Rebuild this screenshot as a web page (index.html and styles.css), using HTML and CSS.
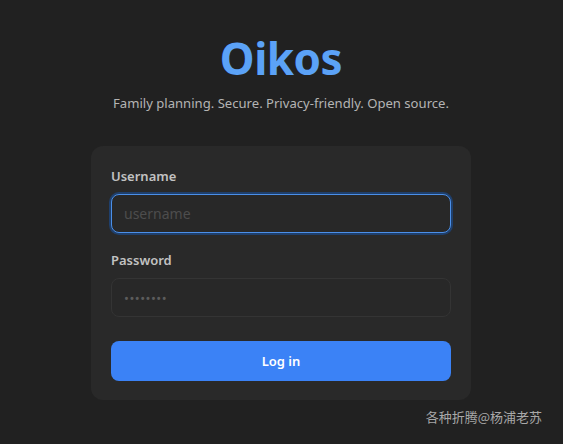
FILE: index.html
```html
<!DOCTYPE html>
<html lang="en">
<head>
<meta charset="utf-8">
<title>Oikos</title>
<link rel="stylesheet" href="styles.css">
</head>
<body>
<main class="page">
  <h1 class="brand">Oikos</h1>
  <p class="tagline">Family planning. Secure. Privacy-friendly. Open source.</p>
  <form class="card">
    <label class="label" for="username">Username</label>
    <input class="field field-focus" id="username" type="text" placeholder="username">
    <label class="label label-gap" for="password">Password</label>
    <input class="field field-pass" id="password" type="password" placeholder="••••••••">
    <button class="btn" type="button">Log in</button>
  </form>
</main>
<div class="watermark">各种折腾@杨浦老苏</div>
</body>
</html>
```

FILE: styles.css
```css
* { box-sizing: border-box; }
html, body { margin: 0; height: 100%; }
body {
  background: #212121;
  font-family: "Noto Sans", "Open Sans", sans-serif;
  color: #c8c8c8;
  position: relative;
  overflow: hidden;
}
.page {
  display: flex;
  flex-direction: column;
  align-items: center;
  padding-top: 31px;
  padding-right: 1px;
}
.brand {
  margin: 0;
  font-size: 44px;
  line-height: 54px;
  font-weight: 700;
  color: #5ba2f7;
  letter-spacing: -0.5px;
}
.tagline {
  margin: 8px 0 0;
  font-size: 13.1px;
  line-height: 20px;
  color: #b4b4b4;
}
.card {
  margin-top: 33px;
  width: 380px;
  background: #292929;
  border-radius: 12px;
  padding: 20px 20px 19px;
  display: flex;
  flex-direction: column;
}
.label {
  font-size: 13px;
  line-height: 20px;
  font-weight: 600;
  color: #c2c2c2;
  margin-bottom: 8px;
}
.label-gap { margin-top: 17px; }
.field {
  height: 39px;
  width: 100%;
  background: #282828;
  border: 1px solid #343434;
  border-radius: 8px;
  padding: 0 12px;
  font-family: inherit;
  font-size: 14px;
  color: #ddd;
  outline: none;
}
.field::placeholder { color: #4d4d4d; }
.field-pass::placeholder { color: #5c5c5c; font-size: 13px; letter-spacing: 0.5px; }
.field-focus {
  border: 1px solid #4b8fe8;
  box-shadow: 0 0 0 2px #1f3f6b;
}
.btn {
  margin-top: 24px;
  height: 40px;
  border: none;
  border-radius: 8px;
  background: #3b82f6;
  color: #fff;
  font-family: inherit;
  font-size: 13px;
  font-weight: 600;
}
.watermark {
  position: absolute;
  right: 21px;
  bottom: 18px;
  font-family: "Noto Sans CJK SC", sans-serif;
  font-size: 13px;
  color: #a8a8a8;
}
```
